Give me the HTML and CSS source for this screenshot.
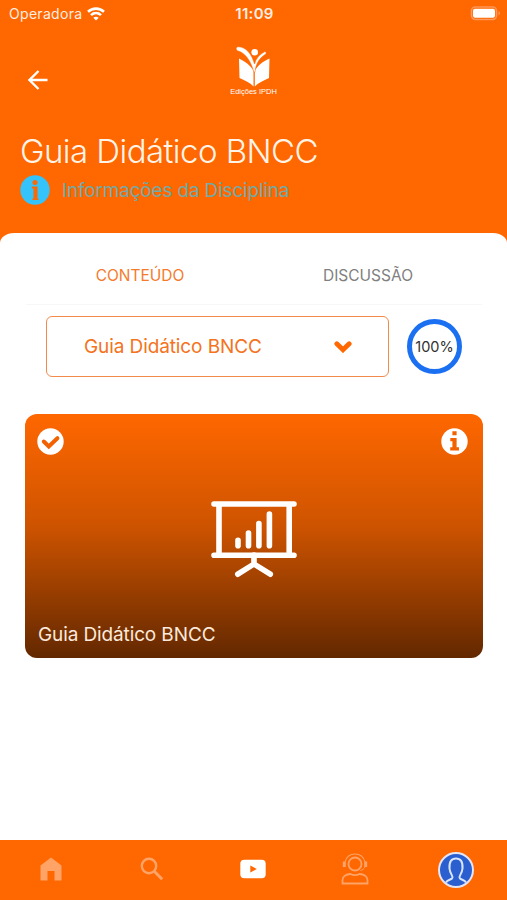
FILE: index.html
```
<!DOCTYPE html>
<html lang="pt-BR">
<head>
  <meta charset="UTF-8" />
  <meta name="viewport" content="width=device-width, initial-scale=1" />
  <title>Guia Didático BNCC</title>
  <link rel="stylesheet" href="styles.css">
</head>
<body>
  <div class="app">
    <header class="header">
      <div class="status">
        <div class="carrier">
          <span>Operadora</span>
          <svg width="18" height="14" viewBox="0 0 18 14" fill="none" stroke="#fff" stroke-width="2.6">
            <path d="M1 4.8C5.5 .6 12.5 .6 17 4.8" />
            <path d="M4 8.1c3-2.8 7-2.8 10 0" />
            <path d="M9 13.6l-2.7-2.8c1.6-1.4 3.8-1.4 5.4 0z" fill="#fff" stroke="none" />
          </svg>
        </div>
        <span class="clock">11:09</span>
        <svg class="battery" width="31" height="15" viewBox="0 0 31 15">
          <rect x="1.5" y="1" width="25" height="12.5" rx="4" fill="none" stroke="#ff985a" stroke-width="1.6" />
          <rect x="3" y="2.7" width="22" height="9" rx="2" fill="#fff" />
          <path d="M28.6 5v4.4c1.7-.7 1.7-3.7 0-4.4z" fill="#ffa467" />
        </svg>
      </div>

      <div class="topbar">
        <button class="back" aria-label="Voltar">
          <svg width="20" height="20" viewBox="0 0 20 20" fill="none" stroke="#fff" stroke-width="2.3">
            <path d="M19.5 10H1.8M10.5 1L1.5 10l9 9" />
          </svg>
        </button>
        <div class="logo">
          <svg width="36" height="42" viewBox="0 0 36 42">
            <path d="M3 12.5c6.5 3 11.5 7 14.5 12v16c-3-3.500-8-6-14-8.500z" fill="#fff" />
            <path d="M33.5 12.5c-7 3-11.5 7-14.700 12v16c3.200-3.500 8.500-6 14.200-8.500z" fill="#fff" />
            <path d="M2 .8C10 .8 15.5 7.500 18.500 18 20 12.500 23.500 8.500 28.500 5.800c2-.5 2.200 2 .5 2.800-5.500 3.600-9 8.900-10 17.400h-1.200C15 15.500 9.500 7 2.200 5-.5 4.300-.3 1 2 .8z" fill="#fff" stroke="#ff6700" stroke-width=".5" />
            <circle cx="18.7" cy="6.3" r="3.3" fill="#fff" />
          </svg>
          <span>Edições IPDH</span>
        </div>
      </div>

      <h1>Guia Didático BNCC</h1>
      <div class="info-link">
        <svg width="30" height="30" viewBox="0 0 30 30">
          <circle cx="15" cy="15" r="14.7" fill="#34c3fb" />
          <circle cx="15" cy="7.6" r="2.5" fill="#ff6700" />
          <path d="M11.8 11.5h5.700v12h1V25h-6v-1.500h1V13.500h-1.700z" fill="#ff6700" />
        </svg>
        <span>Informações da Disciplina</span>
      </div>
    </header>

    <main class="sheet">
      <div class="tabs">
        <button class="tab active">CONTEÚDO</button>
        <button class="tab">DISCUSSÃO</button>
      </div>

      <div class="module">
        <button class="select">
          <span>Guia Didático BNCC</span>
          <svg width="18" height="13" viewBox="0 0 18 13" fill="none" stroke="#ff6700" stroke-width="4.8" stroke-linecap="round">
            <path d="M2.8 3.8L9 9.800l6.200-6" />
          </svg>
        </button>
        <div class="progress">100%</div>
      </div>

      <article class="card">
        <div class="card-top">
          <svg width="27" height="27" viewBox="0 0 27 27">
            <circle cx="13.5" cy="13.5" r="13.2" fill="#fff" />
            <path d="M6.8 13.5l5 5 8.600-8.300" fill="none" stroke="#f26200" stroke-width="4" stroke-linecap="round" />
          </svg>
          <svg width="27" height="27" viewBox="0 0 27 27">
            <circle cx="13.5" cy="13.5" r="13.2" fill="#fff" />
            <path d="M11.4 3.3h4.200v3.900h-4.200zM9.300 10h6.300v9.200H18v3.200H9.200v-3.200h2.200v-6H9.300z" fill="#f26200" />
          </svg>
        </div>
        <svg class="board" width="86" height="78" viewBox="0 0 86 78" fill="none" stroke="#fff" stroke-width="5.6" stroke-linecap="round">
          <path d="M3 4h80M3 55.3h80M8 4v51M78.2 4v51" />
          <path d="M27 40.2v5.5M37.5 33v12.7M47.9 23.5v22.2M58.4 14v31.7" />
          <path d="M43 55v9M43 64L26.8 74.2M43 64l16.3 10.2" />
        </svg>
        <h2>Guia Didático BNCC</h2>
      </article>
    </main>

    <nav class="navbar">
      <a class="nav-item" aria-label="Início">
        <svg width="22" height="24" viewBox="0 0 22 24" fill="#ffa366">
          <path d="M.5 8.5L11 .5l10.500 8V23.500H14.500V14h-7v9.500h-7z" />
        </svg>
      </a>
      <a class="nav-item" aria-label="Buscar">
        <svg width="24" height="24" viewBox="0 0 24 24" fill="none" stroke="#ffa366">
          <circle cx="9" cy="9" r="7.2" stroke-width="2.4" />
          <path d="M14.2 14.2l8 8" stroke-width="3" />
        </svg>
      </a>
      <a class="nav-item" aria-label="Vídeos">
        <svg width="26" height="20" viewBox="0 0 26 20">
          <rect x=".3" y=".8" width="25.4" height="18.4" rx="4" fill="#fff" />
          <path d="M10.3 6.5v7l6.500-3.500z" fill="#ff6700" />
        </svg>
      </a>
      <a class="nav-item" aria-label="Suporte">
        <svg width="28" height="32" viewBox="0 0 28 32" fill="none" stroke="#ffa366" stroke-width="1.8">
          <circle cx="14" cy="11" r="6.5" />
          <path d="M4 9C5.5 3.500 9.500 1 14 1s8.500 2.500 10 8" stroke-width="1.1" />
          <path d="M3.3 8.500v5.500M24.700 8.500v5.500" stroke-width="3" />
          <path d="M24 14c-1 2-2.500 3-4.500 3.500" stroke-width="1" />
          <path d="M1.5 30.500v-3.500C1.500 23.500 5 21 9.500 21c2.500 1.300 6.500 1.300 9 0 4.500 0 8 2.500 8 6v3.500z" />
        </svg>
      </a>
      <a class="nav-item profile" aria-label="Perfil">
        <svg width="36" height="36" viewBox="0 0 36 36">
          <circle cx="18" cy="18" r="17" fill="#2b5fcf" stroke="#e4e4f2" stroke-width="2" />
          <path d="M8 30.500c1.500-3 6-2.500 6.500-5 .3-2-2.600-4-3-9C11 9.500 13.500 6.500 18 6.500s7 3 6.500 10c-.4 5-3.300 7-3 9 .5 2.500 5 2 6.500 5" fill="none" stroke="#d9e5fb" stroke-width="2" />
        </svg>
      </a>
    </nav>
  </div>
</body>
</html>
```
FILE: styles.css
```
* {
  box-sizing: border-box;
}

body {
  margin: 0;
  font-family: Inter, "Liberation Sans", sans-serif;
  background: #ff6700;
}

button {
  font-family: inherit;
  background: none;
  border: none;
  padding: 0;
}

svg {
  display: block;
}

.app {
  height: 900px;
  display: flex;
  flex-direction: column;
}

.header {
  height: 233px;
  color: #fff;
}

.status {
  height: 27px;
  padding: 0 6px 0 9px;
  display: grid;
  grid-template-columns: 1fr auto 1fr;
  align-items: center;
  font-size: 14px;
  color: #ffede0;
}

.carrier {
  display: flex;
  align-items: center;
  gap: 5px;
  letter-spacing: 0.3px;
}

.clock {
  font-weight: 600;
  font-size: 15px;
  letter-spacing: 0.3px;
  margin-right: 1px;
}

.battery {
  justify-self: end;
}

.topbar {
  height: 77px;
  padding: 0 28px;
  display: grid;
  grid-template-columns: 1fr auto 1fr;
  align-items: center;
}

.back {
  width: 20px;
  margin-top: 28px;
}

.logo {
  display: flex;
  flex-direction: column;
  align-items: center;
  margin-top: 10px;
  font-family: "Liberation Sans", sans-serif;
  font-size: 7.5px;
  line-height: 7px;
}

h1 {
  margin: 26px 0 0 20px;
  font-size: 33px;
  font-weight: 350;
  line-height: 42px;
  letter-spacing: -0.55px;
  color: #fff4e8;
  white-space: nowrap;
}

.info-link {
  margin: 3px 0 0 20px;
  display: flex;
  align-items: center;
  gap: 12px;
  font-size: 19px;
  letter-spacing: -0.18px;
  color: #71aaa6;
}

.sheet {
  flex: 1;
  background: #fff;
  border-radius: 14px 14px 0 0 / 10px 10px 0 0;
  padding: 12px 24px 0 25px;
}

.tabs {
  height: 60px;
  margin: 0 1px;
  display: grid;
  grid-template-columns: 1fr 1fr;
  border-bottom: 1px solid #f7f7f7;
}

.tab {
  font-size: 15.5px;
  padding-top: 1px;
  color: #808080;
}

.tab.active {
  color: #f57a2c;
}

.module {
  display: flex;
  align-items: center;
  gap: 18px;
  padding: 11px 21px 0;
}

.select {
  flex: 1;
  height: 61px;
  padding: 0 36px 0 37px;
  display: flex;
  align-items: center;
  justify-content: space-between;
  border: 1.5px solid #f28a4b;
  border-radius: 6px;
  font-size: 19px;
  letter-spacing: -0.1px;
  color: #f47220;
}

.progress {
  width: 55px;
  height: 55px;
  display: flex;
  align-items: center;
  justify-content: center;
  border: 5px solid #1b70f2;
  border-radius: 50%;
  font-size: 14.5px;
  color: #303030;
}

.card {
  height: 244px;
  margin-top: 37px;
  padding: 14px 15px 10px 12px;
  display: flex;
  flex-direction: column;
  justify-content: space-between;
  border-radius: 12px;
  background: linear-gradient(#ff6700, #cf5400 45%, #632800);
}

.card-top {
  display: flex;
  justify-content: space-between;
}

.board {
  align-self: center;
  margin-left: 3px;
}

h2 {
  margin: 0 0 0 1px;
  font-size: 19px;
  font-weight: 400;
  line-height: 26px;
  letter-spacing: -0.12px;
  color: #fbe9dc;
}

.navbar {
  height: 60px;
  background: #ff6700;
  display: grid;
  grid-template-columns: repeat(5, 1fr);
}

.nav-item {
  display: flex;
  align-items: center;
  justify-content: center;
  padding-bottom: 3px;
}

.nav-item.profile {
  padding-bottom: 0;
}
```
